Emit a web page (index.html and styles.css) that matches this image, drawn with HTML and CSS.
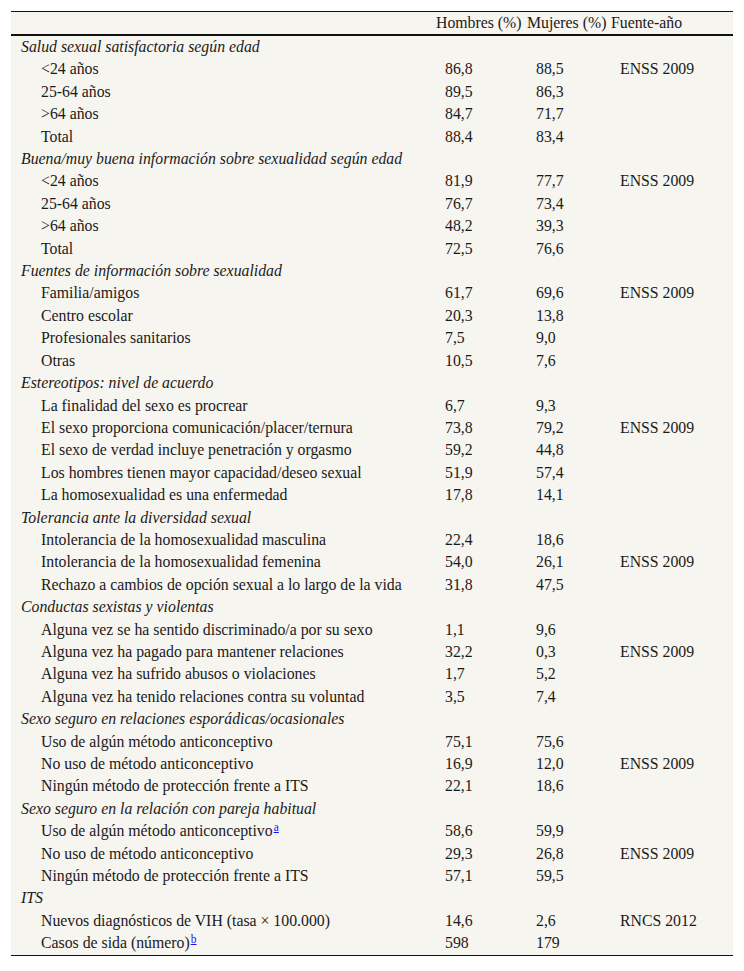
FILE: index.html
```html
<!DOCTYPE html>
<html lang="es">
<head>
<meta charset="utf-8">
<link rel="stylesheet" href="styles.css">
</head>
<body>
<table class="tbl">
<colgroup><col class="c-label"><col class="c-h"><col class="c-m"><col class="c-f"></colgroup>
<thead>
<tr><th></th><th>Hombres (%)</th><th>Mujeres (%)</th><th>Fuente-año</th></tr>
</thead>
<tbody>
<tr class="sec"><td colspan="4">Salud sexual satisfactoria según edad</td></tr>
<tr><td>&lt;24 años</td><td>86,8</td><td>88,5</td><td>ENSS 2009</td></tr>
<tr><td>25-64 años</td><td>89,5</td><td>86,3</td><td></td></tr>
<tr><td>&gt;64 años</td><td>84,7</td><td>71,7</td><td></td></tr>
<tr><td>Total</td><td>88,4</td><td>83,4</td><td></td></tr>
<tr class="sec"><td colspan="4">Buena/muy buena información sobre sexualidad según edad</td></tr>
<tr><td>&lt;24 años</td><td>81,9</td><td>77,7</td><td>ENSS 2009</td></tr>
<tr><td>25-64 años</td><td>76,7</td><td>73,4</td><td></td></tr>
<tr><td>&gt;64 años</td><td>48,2</td><td>39,3</td><td></td></tr>
<tr><td>Total</td><td>72,5</td><td>76,6</td><td></td></tr>
<tr class="sec"><td colspan="4">Fuentes de información sobre sexualidad</td></tr>
<tr><td>Familia/amigos</td><td>61,7</td><td>69,6</td><td>ENSS 2009</td></tr>
<tr><td>Centro escolar</td><td>20,3</td><td>13,8</td><td></td></tr>
<tr><td>Profesionales sanitarios</td><td>7,5</td><td>9,0</td><td></td></tr>
<tr><td>Otras</td><td>10,5</td><td>7,6</td><td></td></tr>
<tr class="sec"><td colspan="4">Estereotipos: nivel de acuerdo</td></tr>
<tr><td>La finalidad del sexo es procrear</td><td>6,7</td><td>9,3</td><td></td></tr>
<tr><td>El sexo proporciona comunicación/placer/ternura</td><td>73,8</td><td>79,2</td><td>ENSS 2009</td></tr>
<tr><td>El sexo de verdad incluye penetración y orgasmo</td><td>59,2</td><td>44,8</td><td></td></tr>
<tr><td>Los hombres tienen mayor capacidad/deseo sexual</td><td>51,9</td><td>57,4</td><td></td></tr>
<tr><td>La homosexualidad es una enfermedad</td><td>17,8</td><td>14,1</td><td></td></tr>
<tr class="sec"><td colspan="4">Tolerancia ante la diversidad sexual</td></tr>
<tr><td>Intolerancia de la homosexualidad masculina</td><td>22,4</td><td>18,6</td><td></td></tr>
<tr><td>Intolerancia de la homosexualidad femenina</td><td>54,0</td><td>26,1</td><td>ENSS 2009</td></tr>
<tr><td>Rechazo a cambios de opción sexual a lo largo de la vida</td><td>31,8</td><td>47,5</td><td></td></tr>
<tr class="sec"><td colspan="4">Conductas sexistas y violentas</td></tr>
<tr><td>Alguna vez se ha sentido discriminado/a por su sexo</td><td>1,1</td><td>9,6</td><td></td></tr>
<tr><td>Alguna vez ha pagado para mantener relaciones</td><td>32,2</td><td>0,3</td><td>ENSS 2009</td></tr>
<tr><td>Alguna vez ha sufrido abusos o violaciones</td><td>1,7</td><td>5,2</td><td></td></tr>
<tr><td>Alguna vez ha tenido relaciones contra su voluntad</td><td>3,5</td><td>7,4</td><td></td></tr>
<tr class="sec"><td colspan="4">Sexo seguro en relaciones esporádicas/ocasionales</td></tr>
<tr><td>Uso de algún método anticonceptivo</td><td>75,1</td><td>75,6</td><td></td></tr>
<tr><td>No uso de método anticonceptivo</td><td>16,9</td><td>12,0</td><td>ENSS 2009</td></tr>
<tr><td>Ningún método de protección frente a ITS</td><td>22,1</td><td>18,6</td><td></td></tr>
<tr class="sec"><td colspan="4">Sexo seguro en la relación con pareja habitual</td></tr>
<tr><td>Uso de algún método anticonceptivo<sup><a href="#">a</a></sup></td><td>58,6</td><td>59,9</td><td></td></tr>
<tr><td>No uso de método anticonceptivo</td><td>29,3</td><td>26,8</td><td>ENSS 2009</td></tr>
<tr><td>Ningún método de protección frente a ITS</td><td>57,1</td><td>59,5</td><td></td></tr>
<tr class="sec"><td colspan="4">ITS</td></tr>
<tr><td>Nuevos diagnósticos de VIH (tasa × 100.000)</td><td>14,6</td><td>2,6</td><td>RNCS 2012</td></tr>
<tr><td>Casos de sida (número)<sup><a href="#">b</a></sup></td><td>598</td><td>179</td><td></td></tr>
</tbody>
</table>
</body>
</html>
```
FILE: styles.css
```css
html, body { background: #ffffff; }
body {
  margin: 11px;
  font-family: "Liberation Serif", "Times New Roman", serif;
  font-size: 15.8px;
  color: #1a1a1a;
}
.tbl {
  width: 722px;
  border-collapse: collapse;
  background: #f7f5ef;
  table-layout: fixed;
}
.c-label { width: 421px; }
.c-h { width: 91px; }
.c-m { width: 84px; }
.c-f { width: 126px; }
.tbl thead tr {
  border-top: 1px solid #111;
  border-bottom: 2px solid #111;
}
.tbl th {
  font-weight: normal;
  text-align: left;
  height: 22px;
  padding: 0 0 0 4px;
  line-height: 22px;
  white-space: nowrap;
}
.tbl tbody tr:last-child { border-bottom: 1px solid #111; }
.tbl td {
  height: 22.4px;
  line-height: 22.4px;
  padding: 0 0 0 13px;
  white-space: nowrap;
  vertical-align: middle;
}
.tbl td:first-child { padding-left: 30px; }
.tbl tr.sec td { padding-left: 10px; font-style: italic; }
.tbl sup { font-size: 11.5px; line-height: 0; vertical-align: 5px; margin-left: 1px; }
.tbl sup a { color: #1a0dff; text-decoration: underline; }
```
